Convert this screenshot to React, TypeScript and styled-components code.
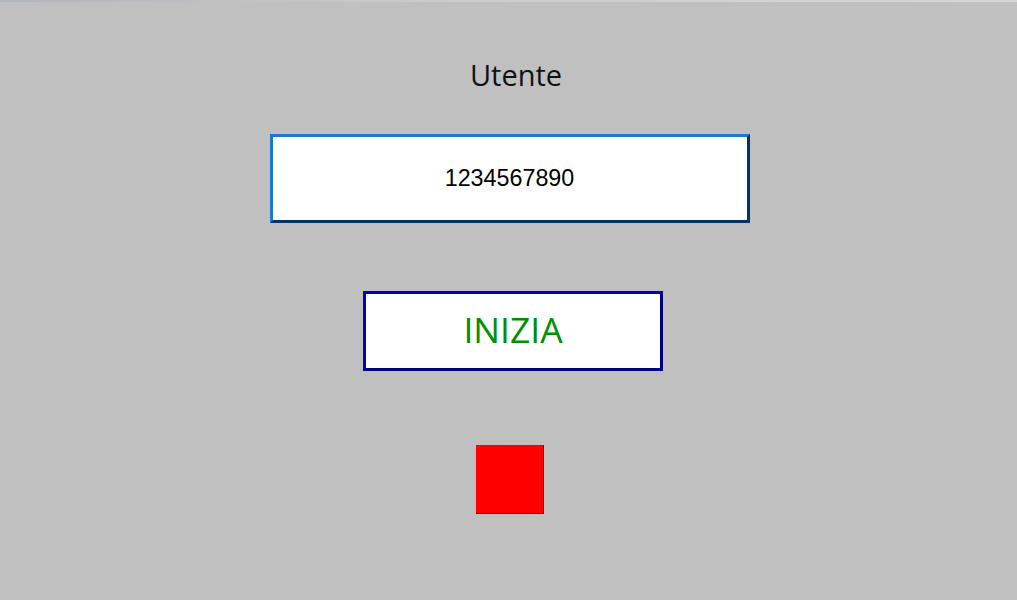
import React from "react";
import styled, { createGlobalStyle } from "styled-components";

const GlobalStyle = createGlobalStyle`
  html, body {
    margin: 0;
    padding: 0;
    background: #c0c0c0;
  }
`;

const Page = styled.div`
  width: 1017px;
  height: 600px;
  background: #c0c0c0;
  display: flex;
  flex-direction: column;
  align-items: center;
  overflow: hidden;
`;

const TopStrip = styled.div`
  align-self: stretch;
  height: 2px;
  background: linear-gradient(90deg, #aeb4bb, #c8ccd0 40%, #d4d6d8);
`;

const Label = styled.div`
  margin-top: 56px;
  margin-left: 15px;
  font-family: "Open Sans", "Noto Sans", sans-serif;
  font-size: 29px;
  line-height: 34px;
  color: #111;
`;

const IdBox = styled.div`
  margin-top: 42px;
  margin-left: 2px;
  width: 474px;
  height: 83px;
  background: #fff;
  border: 3px solid;
  border-color: #1a78d4 #003366 #003366 #1a78d4;
  display: flex;
  align-items: center;
  justify-content: center;
  font-family: "Liberation Sans", Arial, sans-serif;
  font-size: 23.3px;
  color: #000;
`;

const StartButton = styled.button`
  margin-top: 68px;
  margin-left: 9px;
  width: 300px;
  height: 80px;
  background: #fff;
  border: 3px solid;
  border-color: #0000c0 #000080 #000080 #0000c0;
  display: flex;
  align-items: center;
  justify-content: center;
  font-family: "Open Sans", "Noto Sans", sans-serif;
  font-size: 35.5px;
  color: #009000;
  padding: 0 0 4px 0;
  cursor: pointer;
`;

const Indicator = styled.div<{ $on: boolean }>`
  margin-top: 74px;
  margin-left: 2px;
  width: 67px;
  height: 68px;
  background: ${(p) => (p.$on ? "#00d000" : "#ff0000")};
  border-right: 1px solid #800000;
  border-bottom: 1px solid #800000;
`;

export default function App() {
  return (
    <>
      <GlobalStyle />
      <Page>
        <TopStrip />
        <Label>Utente</Label>
        <IdBox>1234567890</IdBox>
        <StartButton>INIZIA</StartButton>
        <Indicator $on={false} />
      </Page>
    </>
  );
}
